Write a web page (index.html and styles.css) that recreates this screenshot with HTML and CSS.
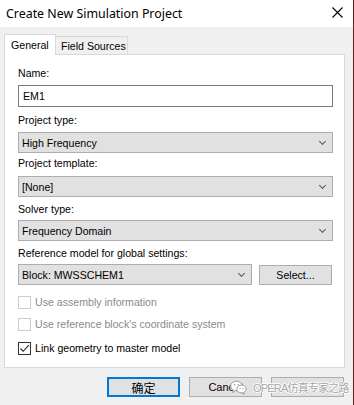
FILE: index.html
```html
<!DOCTYPE html>
<html>
<head>
<meta charset="utf-8">
<link rel="stylesheet" href="styles.css">
</head>
<body>
<div class="window">
  <div class="titlebar">
    <span class="title">Create New Simulation Project</span>
    <span class="close">
      <svg width="11" height="11" viewBox="0 0 11 11"><path d="M0.5 0.5 L10.5 10.5 M10.5 0.5 L0.5 10.5" stroke="#000" stroke-width="1.1" fill="none"/></svg>
    </span>
  </div>
  <div class="body">
    <div class="tabs">
      <div class="tab active">General</div>
      <div class="tab">Field Sources</div>
    </div>
    <div class="panel">
      <div class="label l-name">Name:</div>
      <div class="textbox">EM1</div>

      <div class="label l-type">Project type:</div>
      <div class="combo c-type"><span>High Frequency</span><i class="chev"></i></div>

      <div class="label l-tpl">Project template:</div>
      <div class="combo c-tpl"><span>[None]</span><i class="chev"></i></div>

      <div class="label l-solver">Solver type:</div>
      <div class="combo c-solver"><span>Frequency Domain</span><i class="chev"></i></div>

      <div class="label l-ref">Reference model for global settings:</div>
      <div class="refrow">
        <div class="combo c-block"><span>Block: MWSSCHEM1</span><i class="chev"></i></div>
        <div class="btn select">Select...</div>
      </div>

      <div class="check disabled c1"><span class="box"></span><span>Use assembly information</span></div>
      <div class="check disabled c2"><span class="box"></span><span>Use reference block's coordinate system</span></div>
      <div class="check c3"><span class="box checked"><svg width="11" height="11" viewBox="0 0 11 11"><path d="M1.5 5.5 L4.2 8.3 L9.8 2.2" stroke="#222" stroke-width="1.1" fill="none"/></svg></span><span>Link geometry to master model</span></div>
    </div>
    <div class="buttons">
      <div class="btn default">确定</div>
      <div class="btn">Cancel</div>
      <div class="btn"></div>
      <div class="watermark">
        <svg class="wx" width="17" height="15" viewBox="0 0 17 15">
          <ellipse cx="6.5" cy="6" rx="5.8" ry="4.8" fill="#fff" stroke="#9a9a9a" stroke-width="1"/>
          <path d="M3 10 L2.5 12.5 L5.5 10.6" fill="#fff" stroke="#9a9a9a" stroke-width="1"/>
          <ellipse cx="11.5" cy="9" rx="4.6" ry="3.9" fill="#fff" stroke="#9a9a9a" stroke-width="1"/>
          <path d="M13.5 12.3 L14.3 14.2 L11.8 12.8" fill="#fff" stroke="#9a9a9a" stroke-width="1"/>
          <circle cx="4.6" cy="4.8" r="0.8" fill="#9a9a9a"/>
          <circle cx="8.2" cy="4.8" r="0.8" fill="#9a9a9a"/>
          <circle cx="10" cy="8.4" r="0.6" fill="#9a9a9a"/>
          <circle cx="13" cy="8.4" r="0.6" fill="#9a9a9a"/>
        </svg>
        <span class="wtext">OPERA仿真专家之路</span>
      </div>
    </div>
  </div>
</div>
</body>
</html>
```

FILE: styles.css
```css
* { box-sizing: border-box; }
html, body { margin: 0; padding: 0; }
body {
  width: 354px;
  height: 405px;
  overflow: hidden;
  background: #f0f0f0;
  font-family: "Liberation Sans", Arial, sans-serif;
  font-size: 10.6px;
  color: #000;
}
.window {
  width: 354px;
  height: 405px;
  border-right: 1px solid #6a1c1c;
  background: #f0f0f0;
}
.titlebar {
  height: 27px;
  background: #fff;
  display: flex;
  align-items: center;
  justify-content: space-between;
  padding-left: 6px;
  padding-right: 10px;
}
.title {
  font-family: "Noto Sans", "Open Sans", sans-serif;
  font-size: 12.4px;
  color: #000;
  margin-top: -1px;
  white-space: nowrap;
}
.close { display: flex; margin-top: -2px; }
.body {
  padding: 7px 9px 0 4px;
  position: relative;
}
.tabs {
  display: flex;
  align-items: flex-end;
  height: 20px;
  position: relative;
  z-index: 1;
}
.tab {
  height: 18px;
  border: 1px solid #d9d9d9;
  border-bottom: none;
  background: #f0f0f0;
  display: flex;
  align-items: center;
  font-size: 10.6px;
  white-space: nowrap;
}
.tab.active {
  height: 21px;
  width: 52px;
  background: #fff;
  margin-bottom: -1px;
  padding-left: 6px;
  padding-bottom: 1px;
}
.tab:not(.active) { width: 73px; margin-left: -1px; padding-left: 5px; }
.panel {
  width: 341px;
  height: 314px;
  background: #fff;
  border: 1px solid #d9d9d9;
  padding: 0 11px 0 13px;
}
.label { height: 14px; line-height: 14px; white-space: nowrap; }
.l-name { margin-top: 11px; }
.l-type { margin-top: 6px; }
.l-tpl { margin-top: 3px; }
.l-solver { margin-top: 5px; }
.l-ref { margin-top: 5px; }
.textbox {
  margin-top: 5px;
  height: 22px;
  border: 1px solid #7a7a7a;
  background: #fff;
  padding-left: 4px;
  display: flex;
  align-items: center;
}
.combo {
  height: 21px;
  border: 1px solid #adadad;
  background: #e1e1e1;
  display: flex;
  align-items: center;
  justify-content: space-between;
  padding: 0 6px 0 3px;
}
.c-type { margin-top: 5px; }
.c-tpl { margin-top: 6px; }
.c-solver { margin-top: 4px; }
.chev {
  width: 5px;
  height: 5px;
  border-right: 1px solid #555;
  border-bottom: 1px solid #555;
  transform: rotate(45deg);
  margin-top: -3px;
  margin-right: 1px;
}
.refrow {
  margin-top: 4px;
  display: flex;
  gap: 7px;
  align-items: center;
}
.c-block { width: 234px; }
.btn {
  height: 20px;
  border: 1px solid #adadad;
  background: #e1e1e1;
  display: flex;
  align-items: center;
  justify-content: center;
  width: 73px;
  white-space: nowrap;
}
.select { width: 73px; font-size: 10.6px; }
.check {
  display: flex;
  align-items: center;
  height: 14px;
  gap: 4px;
  white-space: nowrap;
}
.check .box {
  width: 13px;
  height: 13px;
  border: 1px solid #333;
  background: #fff;
  display: flex;
  align-items: center;
  justify-content: center;
}
.check.disabled { color: #8a8a8a; }
.check.disabled .box { border-color: #cccccc; background: #fff; }
.c1 { margin-top: 10px; }
.c2 { margin-top: 8px; }
.c3 { margin-top: 10px; }
.buttons {
  display: flex;
  justify-content: flex-end;
  gap: 9px;
  margin-top: 9px;
  position: relative;
}
.buttons .btn { width: 73px; font-size: 11px; }
.btn.default {
  border: 2px solid #0078d7;
  font-family: "Noto Sans CJK SC", sans-serif;
  font-size: 12px;
}
.watermark {
  position: absolute;
  left: 226px;
  top: 2px;
  display: flex;
  align-items: center;
  gap: 6px;
  white-space: nowrap;
  pointer-events: none;
}
.wtext {
  font-family: "Liberation Sans", "Noto Sans CJK SC", sans-serif;
  font-size: 11px;
  color: #a6a6a6;
  letter-spacing: -0.8px;
  text-shadow: 0 0 1px #fff, 1px 0 0 #fff, -1px 0 0 #fff, 0 1px 0 #fff, 0 -1px 0 #fff;
}
```
